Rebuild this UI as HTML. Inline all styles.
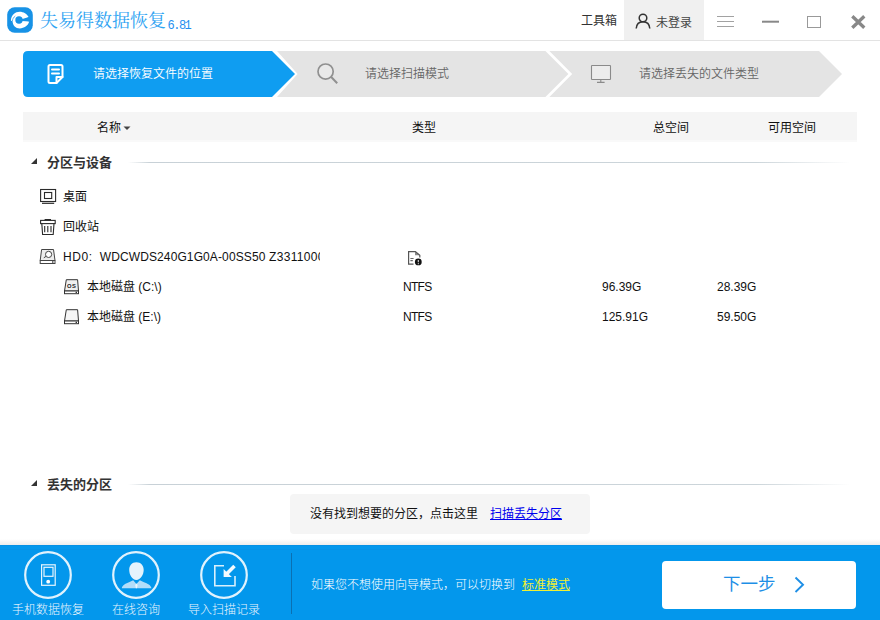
<!DOCTYPE html>
<html lang="zh-CN">
<head>
<meta charset="utf-8">
<title>失易得数据恢复</title>
<style>
html,body{margin:0;padding:0;}
body{width:880px;height:620px;overflow:hidden;background:#fff;position:relative;
  font-family:"Liberation Sans","Noto Sans CJK SC",sans-serif;font-size:12px;color:#111;}
.abs{position:absolute;white-space:nowrap;line-height:1;}
#logo{left:7px;top:7px;width:26px;height:26px;}
#title{left:40px;top:12px;font-family:"Liberation Serif","Noto Serif CJK SC",serif;font-size:18px;color:#2ea3f2;letter-spacing:0px;font-weight:400;}
#ver{left:167.5px;top:20px;font-family:"Liberation Mono",monospace;font-size:12px;letter-spacing:-1.5px;color:#1e8ff0;}
#topline{left:0;top:40px;width:880px;height:1px;background:#e3e3e3;}
#tools{left:581px;top:15px;font-size:12px;color:#333;}
#userbg{left:624px;top:0;width:80px;height:40px;background:#f0f0f0;}
#usertxt{left:656px;top:17px;font-size:12px;color:#444;}
#steps{left:0;top:0;width:880px;height:110px;}
.steptxt{font-size:12px;font-weight:350;}
#hdr{left:23px;top:112px;width:834px;height:28px;background:#f5f5f5;border-bottom:2px solid #f9f9f9;}
.h{top:122px;font-size:12px;color:#111;}
.sec{font-size:13px;font-weight:bold;color:#333;}
.row{font-size:12px;color:#111;}
.secline{height:1px;background:linear-gradient(to right,rgba(198,208,214,0) 0%,#c8d1d7 3%,#ccd5da 86%,rgba(204,213,218,0) 99%);}
#hint{left:290px;top:494px;width:300px;height:40px;background:#f5f5f5;border-radius:4px;}
#bottom{left:0;top:545px;width:880px;height:75px;background:linear-gradient(to bottom,#0590e5 0,#0590e5 1px,#0397ec 1px,#0397ec 4px,#0592e7 4px,#0592e7 5px,#0397ec 5px,#0397ec 100%);}
#shadow{left:0;top:539px;width:880px;height:6px;background:linear-gradient(to bottom,#fff,#ececec);}
.blabel{top:604px;font-size:12px;color:#eaf5fd;font-weight:300;}
#next{left:662px;top:561px;width:194px;height:48px;background:#fff;border-radius:4px;}
</style>
</head>
<body>
<!-- title bar -->
<svg id="logo" class="abs" viewBox="0 0 26 26">
  <rect x="0.200" y="0.200" width="25.600" height="25.600" rx="7.500" fill="#1792e6"/>
  <path d="M3.900 13.400 C4.200 8 8.400 4.800 12.600 4.800 C16.600 4.800 20 7 21.700 10.300 L16.200 12.700 L22.200 14.600 C21 19 17 21.400 12.800 21.400 C8.500 21.400 5.800 18.500 5.600 14.500 Z" fill="#fff"/>
  <circle cx="12" cy="13" r="3.700" fill="#1792e6"/>
  <path d="M14.500 12.300 L21.900 9.900 L22.400 14.500 L15 14 Z" fill="#1792e6"/>
  <path d="M5.300 14.500 C5.500 12 6.600 10.200 8.300 9" fill="none" stroke="#1792e6" stroke-width="0.700"/>
</svg>
<div id="title" class="abs">失易得数据恢复</div>
<div id="ver" class="abs">6.81</div>
<div id="tools" class="abs">工具箱</div>
<div id="userbg" class="abs"></div>
<svg class="abs" style="left:633.6px;top:12px;width:18px;height:18px" viewBox="0 0 18 18">
  <circle cx="9" cy="6" r="3.8" fill="none" stroke="#333" stroke-width="1.5"/>
  <path d="M2.2 16.5 C2.6 11.5 5.5 9.8 9 9.8 C12.5 9.8 15.4 11.5 15.8 16.5" fill="none" stroke="#333" stroke-width="1.5"/>
</svg>
<div id="usertxt" class="abs">未登录</div>
<svg class="abs" style="left:710px;top:10px;width:170px;height:24px" viewBox="0 0 170 24">
  <g stroke="#a2a2a2" stroke-width="1">
    <line x1="7" y1="6.5" x2="24" y2="6.5"/><line x1="7" y1="11.5" x2="24" y2="11.5"/><line x1="7" y1="16.5" x2="24" y2="16.5"/>
  </g>
  <line x1="52" y1="11.7" x2="69" y2="11.7" stroke="#888" stroke-width="2"/>
  <rect x="97.500" y="6.500" width="13" height="11" fill="none" stroke="#999" stroke-width="1"/>
  <path d="M142.3 6.2 L154.3 17.8 M154.3 6.2 L142.3 17.800" stroke="#888" stroke-width="3.3" fill="none"/>
</svg>
<div id="topline" class="abs"></div>

<!-- steps -->
<svg id="steps" class="abs" viewBox="0 0 880 110">
  <path d="M28 51 H272 L295 74 L272 97 H28 Q23 97 23 92 V56 Q23 51 28 51 Z" fill="#0f9df1"/>
  <path d="M277 51 H545.4 L568.4 74 L545.4 97 H277 L297.6 74 Z" fill="#e4e4e4"/>
  <path d="M549.4 51 H819 L842 74 L819 97 H549.4 L572.2 74 Z" fill="#e4e4e4"/>
  <!-- doc icon -->
  <g fill="none" stroke="#fff" stroke-width="2" stroke-linejoin="round" stroke-linecap="round">
    <path d="M50 65 H61 Q62.500 65 62.500 66.500 V77 L56.500 83 H50 Q48.500 83 48.500 81.500 V66.500 Q48.500 65 50 65 Z"/>
    <path d="M62.500 77 H56.500 V83"/>
    <path d="M52 69.500 H59 M52 73.500 H59"/>
  </g>
  <!-- search icon -->
  <g fill="none" stroke="#909090" stroke-width="1.7">
    <circle cx="325.6" cy="71.6" r="7.6" fill="#e9e9e9"/>
    <path d="M331.2 77 L337.2 83.2" stroke-width="2"/>
  </g>
  <!-- monitor icon -->
  <g fill="none" stroke="#8a8a8a" stroke-width="1.1">
    <rect x="591.5" y="65.5" width="19" height="14" rx="0.6" fill="#ececec"/>
    <path d="M600.8 79.5 V82 M597 82.4 H604.6"/>
  </g>
</svg>
<div class="abs steptxt" style="left:93px;top:68px;color:#fff;">请选择恢复文件的位置</div>
<div class="abs steptxt" style="left:365px;top:68px;color:#666;">请选择扫描模式</div>
<div class="abs steptxt" style="left:639px;top:68px;color:#666;">请选择丢失的文件类型</div>

<!-- table header -->
<div id="hdr" class="abs"></div>
<div class="abs h" style="left:97px;">名称</div>
<svg class="abs" style="left:123px;top:126px;width:8px;height:5px" viewBox="0 0 8 5"><path d="M0.500 0.500 H7.500 L4 4 Z" fill="#444"/></svg>
<div class="abs h" style="left:412px;">类型</div>
<div class="abs h" style="left:653px;">总空间</div>
<div class="abs h" style="left:768px;">可用空间</div>

<!-- section 1 -->
<svg class="abs" style="left:30px;top:157px;width:8px;height:8px" viewBox="0 0 8 8"><path d="M7 1 V7 H1 Z" fill="#333"/></svg>
<div class="abs sec" style="left:47px;top:156px;">分区与设备</div>
<div class="abs secline" style="left:128px;top:162px;width:730px;"></div>

<!-- rows -->
<svg class="abs" style="left:39px;top:188px;width:18px;height:18px" viewBox="0 0 18 18">
  <g fill="none" stroke="#2a2a2a" stroke-width="1.100"><rect x="1.600" y="1.500" width="15" height="12"/><rect x="5.500" y="4.500" width="7.200" height="6"/><path d="M3 15.300 H15.200" stroke-width="1.200"/></g>
</svg>
<div class="abs row" style="left:63px;top:191px;">桌面</div>

<svg class="abs" style="left:39px;top:218px;width:18px;height:18px" viewBox="0 0 18 18">
  <g fill="none" stroke="#2a2a2a" stroke-width="1.100"><rect x="1.600" y="2.400" width="14.600" height="3.200"/><path d="M5.600 1.700 H12" stroke-width="1.400"/><path d="M2.800 5.600 L3.600 16.500 H14.200 L15 5.600"/><path d="M5.700 8 V14.300 M8.800 8 V14.300 M12 8 V14.300"/></g>
</svg>
<div class="abs row" style="left:63px;top:221px;">回收站</div>

<svg class="abs" style="left:39px;top:248px;width:18px;height:18px" viewBox="0 0 18 18">
  <g fill="none" stroke="#444" stroke-width="1"><path d="M2.600 1.500 H14.500 L16 12.500 H1.200 Z" fill="#ededed"/><rect x="1.200" y="12.500" width="14.800" height="3" fill="#fff"/><circle cx="9.600" cy="6.400" r="3.100" fill="#fff"/><path d="M4.800 9.800 L7 8.400"/><path d="M13 14 H14.500" stroke-width="1.400"/></g>
</svg>
<div class="abs row" style="left:63px;top:251px;width:257px;overflow:hidden;"><span style="letter-spacing:0.6px">HD0:</span><span style="display:inline-block;width:7px"></span><span style="letter-spacing:0.11px">WDCWDS240G1G0A-00SS50</span><span style="letter-spacing:0.3px"> Z33110000</span></div>
<svg class="abs" style="left:407px;top:250px;width:16px;height:16px" viewBox="0 0 16 16">
  <path d="M8 1.600 V5.300 H12.800 Z" fill="#8a8a8a"/>
  <path d="M6.500 14.200 H1.600 V1.600 H8.400 L12.800 5.200 V7.400" fill="none" stroke="#555" stroke-width="1.200"/>
  <path d="M3.400 8.500 H6.600 M3.400 10.600 H5.800" stroke="#666" stroke-width="1.100"/>
  <circle cx="11.300" cy="11.900" r="3.400" fill="#111"/><path d="M11.300 9.900 V12.300" stroke="#ddd" stroke-width="1.100"/><circle cx="11.300" cy="13.700" r="0.600" fill="#ddd"/>
</svg>

<svg class="abs" style="left:63px;top:278px;width:18px;height:18px" viewBox="0 0 18 18">
  <g fill="none" stroke="#333" stroke-width="1"><path d="M3.300 1.700 H14.600 L15.500 13 H1.500 Z" fill="#f0f0f0"/><rect x="1.500" y="13" width="14" height="2.700" fill="#fff"/><path d="M12.600 14.400 H14" stroke-width="1.300"/></g>
  <text x="4.100" y="9.500" font-size="5.800" font-family="Liberation Sans,sans-serif" fill="#222" font-weight="bold" letter-spacing="0.300">OS</text>
</svg>
<div class="abs row" style="left:87px;top:281px;">本地磁盘 (C:\)</div>
<div class="abs row" style="left:403px;top:281px;letter-spacing:-0.7px;">NTFS</div>
<div class="abs row" style="left:602px;top:281px;">96.39G</div>
<div class="abs row" style="left:717px;top:281px;">28.39G</div>

<svg class="abs" style="left:63px;top:308px;width:18px;height:18px" viewBox="0 0 18 18">
  <g fill="none" stroke="#333" stroke-width="1"><path d="M3.300 1.700 H14.600 L15.500 13 H1.500 Z" fill="#f6f6f6"/><rect x="1.500" y="13" width="14" height="2.700" fill="#fff"/><path d="M12.600 14.400 H14" stroke-width="1.300"/></g>
</svg>
<div class="abs row" style="left:87px;top:311px;">本地磁盘 (E:\)</div>
<div class="abs row" style="left:403px;top:311px;letter-spacing:-0.7px;">NTFS</div>
<div class="abs row" style="left:602px;top:311px;">125.91G</div>
<div class="abs row" style="left:717px;top:311px;">59.50G</div>

<!-- section 2 -->
<svg class="abs" style="left:30px;top:479px;width:8px;height:8px" viewBox="0 0 8 8"><path d="M7 1 V7 H1 Z" fill="#333"/></svg>
<div class="abs sec" style="left:47px;top:478px;">丢失的分区</div>
<div class="abs secline" style="left:128px;top:484px;width:730px;"></div>
<div id="hint" class="abs"></div>
<div class="abs" style="left:310px;top:508px;font-size:12px;color:#111;">没有找到想要的分区，点击这里</div>
<div class="abs" style="left:490px;top:508px;font-size:12px;color:#0000ee;text-decoration:underline;">扫描丢失分区</div>

<!-- bottom bar -->
<div id="shadow" class="abs"></div>
<div id="bottom" class="abs"></div>
<svg class="abs" style="left:0;top:545px;width:300px;height:60px" viewBox="0 0 300 60">
  <g fill="none" stroke="#fff" stroke-width="2.200" stroke-opacity="0.880">
    <circle cx="48" cy="30" r="22.800"/><circle cx="136" cy="30" r="22.800"/><circle cx="224" cy="30" r="22.800"/>
  </g>
  <!-- phone -->
  <rect x="41.600" y="19.800" width="13.600" height="20.500" fill="none" stroke="#fff" stroke-width="1.200" stroke-opacity="0.900"/>
  <rect x="44" y="22.300" width="9" height="9" fill="none" stroke="#fff" stroke-width="1.200" stroke-opacity="0.900"/>
  <circle cx="48.200" cy="36.700" r="1.900" fill="#fff"/>
  <!-- person -->
  <path d="M121.800 43.200 C122.200 40 126 38.400 129 37.200 L133.200 35.300 L136.400 39 L139.800 35.300 L144 37.200 C147.500 38.600 151 40 151.500 43.200 Z" fill="#b3ddf9"/>
  <path d="M136.400 38.400 L137.600 40 L136.900 43.200 H135.900 L135.200 40 Z" fill="#eef8fe"/>
  <path d="M136.400 17.300 C141 17.300 143.800 20.800 143.700 25 C143.600 30 140.500 34.900 136.400 34.900 C132.300 34.900 129.300 30 129.200 25 C129.100 20.800 131.800 17.300 136.400 17.300 Z" fill="#e4f3fc"/>
  <!-- import -->
  <path d="M224 20.800 H214.800 V40.800 H235 V31" fill="none" stroke="#fff" stroke-width="1.600" stroke-opacity="0.850"/>
  <path d="M234.500 21 L227 28.500" stroke="#fff" stroke-width="3.600" stroke-opacity="0.950"/>
  <path d="M223.600 24 V32 H231.800 Z" fill="#fff" fill-opacity="0.950"/>
</svg>
<div class="abs blabel" style="left:12px;">手机数据恢复</div>
<div class="abs blabel" style="left:112px;">在线咨询</div>
<div class="abs blabel" style="left:188px;">导入扫描记录</div>
<div class="abs" style="left:291px;top:553px;width:1px;height:61px;background:#0a70b2;"></div>
<div class="abs" style="left:311px;top:579px;font-size:12px;color:#fff;font-weight:300;">如果您不想使用向导模式，可以切换到</div>
<div class="abs" style="left:522px;top:579px;font-size:12px;color:#f0f032;text-decoration:underline;">标准模式</div>
<div id="next" class="abs"></div>
<div class="abs" style="left:723px;top:576px;font-size:17.500px;color:#1e8fe6;">下一步</div>
<svg class="abs" style="left:790px;top:574px;width:16px;height:22px" viewBox="0 0 16 22"><path d="M5.500 3.500 L13 10.800 L5.500 18" fill="none" stroke="#1e8fe6" stroke-width="1.900"/></svg>
</body>
</html>
